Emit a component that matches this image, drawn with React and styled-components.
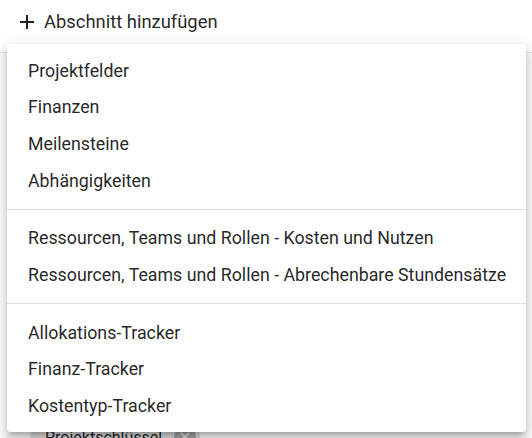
import React from "react";
import styled, { createGlobalStyle } from "styled-components";

const GlobalStyle = createGlobalStyle`
  html, body {
    margin: 0;
    background: #ffffff;
    font-family: Roboto, "Liberation Sans", sans-serif;
  }
`;

const Page = styled.div`
  position: relative;
  width: 532px;
  height: 438px;
  overflow: hidden;
`;

const AddButton = styled.button`
  display: flex;
  align-items: center;
  gap: 10px;
  margin: 10px 0 0 20px;
  padding: 0;
  border: none;
  background: none;
  font-family: inherit;
  font-size: 18.4px;
  line-height: 24px;
  color: rgba(0, 0, 0, 0.87);
  cursor: pointer;
`;

const Section = styled.section`
  margin-top: 18px;
  border-top: 1px solid #e0e0e0;
  height: 400px;
  display: flex;
  flex-direction: column;
  justify-content: flex-end;
  padding: 0 0 0 30px;
`;

const Chip = styled.div`
  display: inline-flex;
  align-items: center;
  align-self: flex-start;
  gap: 12px;
  height: 32px;
  padding: 0 4px 0 15px;
  border-radius: 16px;
  background: #e0e0e0;
  font-size: 16px;
  color: rgba(0, 0, 0, 0.87);
`;

const ChipDelete = styled.span`
  display: inline-flex;
  align-items: center;
  justify-content: center;
  width: 22px;
  height: 22px;
  border-radius: 50%;
  background: #a8a8a8;
`;

const Menu = styled.ul`
  position: absolute;
  left: 7px;
  top: 44px;
  width: 519px;
  margin: 0;
  padding: 8px 0;
  list-style: none;
  background: #ffffff;
  border-radius: 4px;
  box-shadow: 0px 5px 5px -3px rgba(0, 0, 0, 0.2),
    0px 8px 10px 1px rgba(0, 0, 0, 0.14), 0px 3px 14px 2px rgba(0, 0, 0, 0.12);
`;

const Item = styled.li`
  display: flex;
  align-items: center;
  height: 36.67px;
  padding: 0 21px;
  font-size: 17.8px;
  color: rgba(0, 0, 0, 0.87);
  white-space: nowrap;
  cursor: pointer;
  &:hover {
    background: rgba(0, 0, 0, 0.04);
  }
`;

const Divider = styled.li`
  height: 1px;
  margin: 10px 0;
  background: #e0e0e0;
`;

const groups = [
  ["Projektfelder", "Finanzen", "Meilensteine", "Abhängigkeiten"],
  [
    "Ressourcen, Teams und Rollen - Kosten und Nutzen",
    "Ressourcen, Teams und Rollen - Abrechenbare Stundensätze",
  ],
  ["Allokations-Tracker", "Finanz-Tracker", "Kostentyp-Tracker"],
];

export default function App() {
  return (
    <Page>
      <GlobalStyle />
      <AddButton>
        <svg width="14" height="14" viewBox="0 0 14 14">
          <path d="M7 0v14M0 7h14" stroke="#212121" strokeWidth="2" />
        </svg>
        Abschnitt hinzufügen
      </AddButton>
      <Section>
        <Chip>
          Projektschlüssel
          <ChipDelete>
            <svg width="10" height="10" viewBox="0 0 10 10">
              <path d="M1 1l8 8M9 1l-8 8" stroke="#e0e0e0" strokeWidth="2" />
            </svg>
          </ChipDelete>
        </Chip>
      </Section>
      <Menu>
        {groups.map((group, i) => (
          <React.Fragment key={i}>
            {i > 0 && <Divider />}
            {group.map((label) => (
              <Item key={label}>{label}</Item>
            ))}
          </React.Fragment>
        ))}
      </Menu>
    </Page>
  );
}
